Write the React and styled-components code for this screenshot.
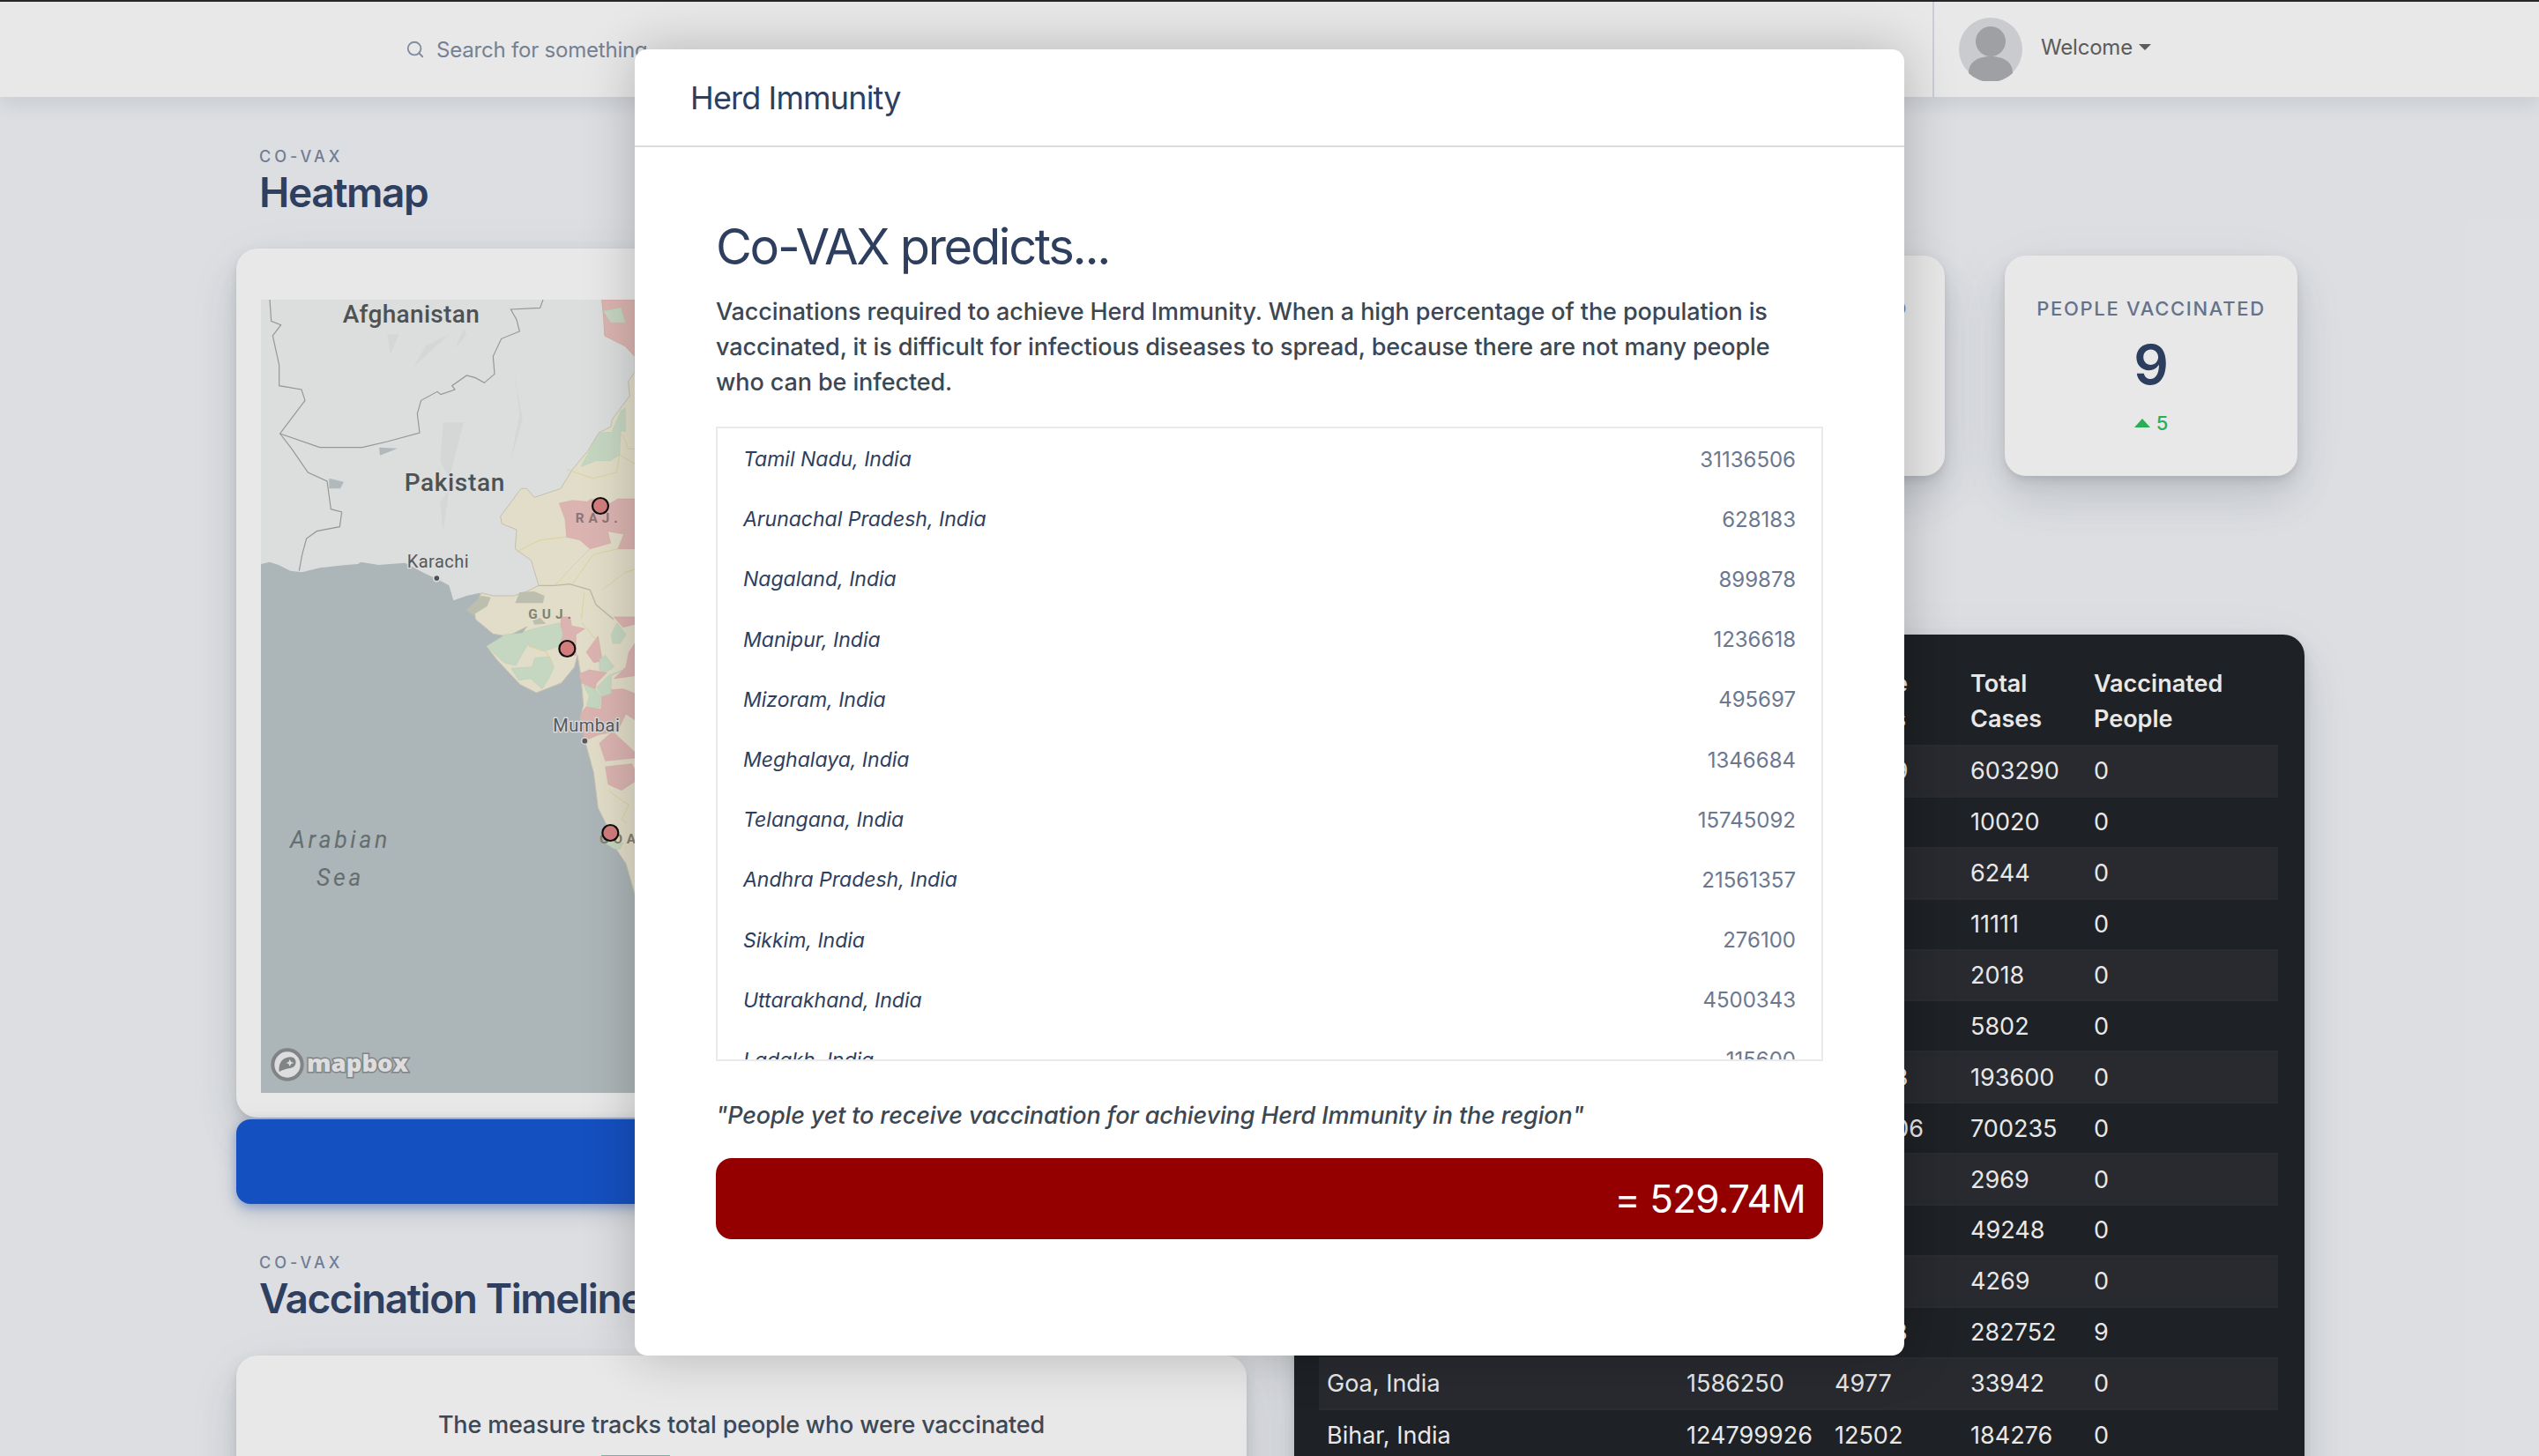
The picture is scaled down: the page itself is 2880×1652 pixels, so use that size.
import React from 'react';
import styled, { createGlobalStyle } from 'styled-components';
import { Search } from 'lucide-react';

const GlobalStyle = createGlobalStyle`
  html, body {
    margin: 0;
    padding: 0;
    background: #f3f5f9;
    font-family: Inter, "Noto Sans", sans-serif;
  }
  * { box-sizing: border-box; }
`;

const cardShadow = `
  0 15px 70px rgba(90,97,105,.1),
  0 30px 45px rgba(90,97,105,.1),
  0 8px 17px rgba(90,97,105,.12),
  0 4px 6px rgba(90,97,105,.1)
`;

const Page = styled.div`
  position: relative;
  height: 1652px;
  overflow: hidden;
`;

const Backdrop = styled.div`
  position: absolute;
  inset: 0;
  background: rgba(0,0,0,.09);
`;

const Topbar = styled.header`
  display: flex;
  height: 110px;
  background: #fff;
  border-top: 2px solid #2a2a2a;
  box-shadow: 0 6px 24px rgba(90,97,105,.16);
`;

const SearchBox = styled.div`
  flex: 1;
  display: flex;
  align-items: center;
  gap: 13px;
  padding: 2px 0 0 460px;
  height: 110px;
  margin-top: -2px;
  color: #8d9bb0;
  font-size: 24px;
  letter-spacing: -0.2px;
  span { color: #818ea3; }
`;

const UserArea = styled.div`
  width: 688px;
  display: flex;
  align-items: center;
  gap: 21px;
  padding-left: 28px;
  border-left: 2px solid #dfe3e9;
`;

const Avatar = styled.svg`
  width: 72px;
  height: 72px;
  margin-top: -1px;
  display: block;
`;

const Welcome = styled.div`
  display: flex;
  align-items: center;
  gap: 7px;
  color: #666;
  font-size: 24px;
  letter-spacing: -0.2px;
  margin-top: -6px;
  &::after {
    content: "";
    border-left: 7px solid transparent;
    border-right: 7px solid transparent;
    border-top: 7px solid #666;
  }
`;

const Main = styled.main`
  display: grid;
  grid-template-columns: 1146px 1146px;
  gap: 54px;
  padding-left: 268px;
`;

const Column = styled.section``;

const SectionHead = styled.div`
  padding-left: 26px;
  margin-top: ${p => p.$top}px;
  margin-bottom: ${p => p.$bottom}px;
`;

const Eyebrow = styled.div`
  font-size: 18px;
  line-height: 24px;
  letter-spacing: 4px;
  color: #7c8aa3;
  font-weight: 500;
`;

const PageTitle = styled.h1`
  margin: 0;
  font-size: 46px;
  line-height: 56px;
  font-weight: 600;
  letter-spacing: -1.4px;
  color: #344669;
  white-space: nowrap;
`;

const MapCard = styled.div`
  background: #fff;
  border-radius: 24px;
  padding: 58px 28px 28px;
  box-shadow: ${cardShadow};
`;

const MapSvg = styled.svg`
  display: block;
  width: 1090px;
  height: 900px;
`;

const BlueBar = styled.div`
  height: 96px;
  margin-top: 2px;
  border-radius: 16px;
  background: #1858d3;
  box-shadow: 0 4px 12px rgba(24,88,211,.4), 0 10px 30px rgba(90,97,105,.18);
`;

const TimelineCard = styled.div`
  background: #fff;
  border-radius: 24px 24px 0 0;
  padding-top: 59px;
  min-height: 300px;
  box-shadow: ${cardShadow};
`;

const MeasureText = styled.p`
  margin: 0;
  text-align: center;
  font-size: 27px;
  line-height: 40px;
  font-weight: 500;
  letter-spacing: -0.18px;
  color: #44505e;
`;

const ChartBar = styled.div`
  width: 78px;
  height: 20px;
  margin: 14px 0 0 414px;
  background: #7ac7b7;
`;

const StatsRow = styled.div`
  display: flex;
  gap: 68px;
  padding-left: 6px;
  margin-top: 180px;
`;

const StatCard = styled.div`
  width: 332px;
  height: 250px;
  padding-top: 46px;
  text-align: center;
  background: #fff;
  border-radius: 24px;
  box-shadow: ${cardShadow};
`;

const StatLabel = styled.div`
  font-size: 22px;
  line-height: 28px;
  letter-spacing: 1.7px;
  font-weight: 500;
  color: #6f7e98;
  white-space: nowrap;
`;

const StatValue = styled.div`
  margin-top: 18px;
  font-size: 62px;
  line-height: 64px;
  font-weight: 600;
  color: #314468;
`;

const StatDelta = styled.div`
  margin-top: 20px;
  display: flex;
  justify-content: center;
  align-items: center;
  gap: 7px;
  font-size: 22px;
  line-height: 28px;
  font-weight: 500;
  color: #2fc05c;
  &::before {
    content: "";
    border-left: 9px solid transparent;
    border-right: 9px solid transparent;
    border-bottom: 10px solid #2fc05c;
  }
`;

const TableCard = styled.div`
  margin-top: 180px;
  padding: 36px 30px 0 28px;
  background: #222529;
  border-radius: 24px 24px 0 0;
  height: 1000px;
  box-shadow: ${cardShadow};
`;

const DataTable = styled.table`
  width: 1088px;
  table-layout: fixed;
  border-collapse: collapse;
  color: #fff;
  font-size: 27px;
`;

const HeadCell = styled.th`
  width: ${p => p.$w}px;
  text-align: left;
  vertical-align: top;
  padding: 0 0 9px 9px;
  line-height: 40px;
  font-weight: 600;
`;

const Row = styled.tr`
  background: ${p => (p.$odd ? '#2c2f34' : 'transparent')};
  border-top: 2px solid #2e3136;
`;

const Cell = styled.td`
  height: 57.9px;
  padding: 0 0 0 9px;
  white-space: nowrap;
`;

const Modal = styled.div`
  position: absolute;
  left: 720px;
  top: 56px;
  width: 1440px;
  height: 1482px;
  background: #fff;
  border-radius: 14px;
  box-shadow: 0 0 60px rgba(0,0,0,.22);
`;

const ModalHeader = styled.div`
  height: 111px;
  display: flex;
  align-items: center;
  padding-left: 63px;
  border-bottom: 2px solid #d9dde2;
  font-size: 36px;
  letter-spacing: -0.85px;
  color: #2d3e5e;
`;

const ModalBody = styled.div`
  padding: 0 92px;
`;

const ModalHeading = styled.h2`
  margin: 79px 0 0;
  font-size: 56px;
  line-height: 68px;
  font-weight: 400;
  letter-spacing: -2.3px;
  color: #2d3e5e;
`;

const ModalText = styled.p`
  margin: 20px 0 30px;
  font-size: 27px;
  line-height: 40px;
  font-weight: 500;
  letter-spacing: -0.1px;
  color: #3d4752;
`;

const RegionList = styled.div`
  height: 720px;
  padding-top: 1px;
  overflow: hidden;
  border: 2px solid #e9eaec;
`;

const RegionRow = styled.div`
  height: 68.2px;
  padding: 0 29px 0 29px;
  display: flex;
  justify-content: space-between;
  align-items: center;
  font-size: 24px;
`;

const RegionName = styled.span`
  font-size: 23px;
  font-style: italic;
  color: #2d3e5e;
`;

const RegionCount = styled.span`
  color: #6b7890;
`;

const Quote = styled.p`
  margin: 42px 0 28px;
  font-size: 27px;
  line-height: 40px;
  font-style: italic;
  font-weight: 500;
  letter-spacing: -0.14px;
  color: #3d4752;
`;

const ResultBar = styled.div`
  height: 92px;
  padding-right: 20px;
  display: flex;
  align-items: center;
  justify-content: flex-end;
  border-radius: 18px;
  background: #940000;
  color: #fff;
  font-size: 44px;
  letter-spacing: -0.8px;
`;

const regions = [
  ['Tamil Nadu, India', 31136506],
  ['Arunachal Pradesh, India', 628183],
  ['Nagaland, India', 899878],
  ['Manipur, India', 1236618],
  ['Mizoram, India', 495697],
  ['Meghalaya, India', 1346684],
  ['Telangana, India', 15745092],
  ['Andhra Pradesh, India', 21561357],
  ['Sikkim, India', 276100],
  ['Uttarakhand, India', 4500343],
  ['Ladakh, India', 115600],
];

const tableRows = [
  ['Tamil Nadu, India', 77841267, 38249, 603290, 0],
  ['Arunachal Pradesh, India', 1570458, 56, 10020, 0],
  ['Nagaland, India', 2249695, 79, 6244, 0],
  ['Manipur, India', 3091545, 142, 11111, 0],
  ['Mizoram, India', 1239244, 27, 2018, 0],
  ['Meghalaya, India', 3366710, 95, 5802, 0],
  ['Telangana, India', 39362732, 29053, 193600, 0],
  ['Andhra Pradesh, India', 53903393, 300506, 700235, 0],
  ['Sikkim, India', 690251, 91, 2969, 0],
  ['Uttarakhand, India', 11250858, 4123, 49248, 0],
  ['Ladakh, India', 289023, 318, 4269, 0],
  ['Gujarat, India', 63872399, 28253, 282752, 9],
  ['Goa, India', 1586250, 4977, 33942, 0],
  ['Bihar, India', 124799926, 12502, 184276, 0],
];

const columns = [
  ['Region', 408],
  ['Population', 168],
  ['Active Cases', 154],
  ['Total Cases', 140],
  ['Vaccinated People', 218],
];

const HeatMap = () => (
  <MapSvg viewBox="0 12 3270 2700">
    <rect x="0" y="12" width="3270" height="2700" fill="#bec7ca" />
    {/* land above the coast */}
    <path
      d="M0 12H3270V1100H760L745 1010 700 1020 655 1036 640 985 610 968 560 945 490 908 400 915 340 905 330 912 290 915 200 925 140 940 100 935 60 915 30 905 0 912Z"
      fill="#f2f3f3"
    />
    {/* relief */}
    <g fill="#ebeded">
      <path d="M620 430L690 430 640 620 610 560Z" />
      <path d="M860 250L890 420 850 560 880 400Z" />
      <path d="M560 170L640 130 520 240Z" />
      <path d="M640 660L620 800 610 700Z" />
      <path d="M430 130L470 130 440 200Z" />
      <path d="M700 130L660 180 690 110Z" />
    </g>
    <path d="M402 515L465 518 405 542Z" fill="#c4ccd0" />
    <path d="M232 620L282 632 270 655 232 655Z" fill="#c4ccd0" />
    {/* India */}
    <path
      d="M1272 260L1250 290 1255 340 1195 420 1190 445 1150 465 1110 530 1060 590 1020 655 930 685 905 655 885 655 815 750 820 775 870 795 865 860 920 900 945 985 905 1005 860 1020 790 1020 750 1010 725 1065 730 1100 790 1150 840 1158 905 1125 870 1175 770 1195 802 1237 882 1322 937 1350 1022 1317 1067 1262 1077 1222 1087 1282 1092 1332 1097 1392 1087 1432 1102 1512 1132 1622 1147 1742 1172 1792 1202 1872 1242 1932 1272 2037 1500 2500H3270V12H1160L1165 60 1170 135 1240 170 1272 205Z"
      fill="#f8f3dc"
      stroke="#d8d4c2"
      strokeWidth="3"
    />
    <g fill="#cfd2bf">
      <path d="M697 1070L750 1020 782 1025 770 1055 722 1085Z" />
      <path d="M865 1045L880 1008 930 1005 965 1020 960 1045Z" />
      <path d="M925 1105L950 1095 970 1115 930 1118Z" />
    </g>
    <g fill="none" stroke="#f5e6b0" strokeWidth="3">
      <path d="M870 870L950 830 1040 820M1000 985L1060 920 1120 860 1190 840M1060 980L1130 880 1215 860M1210 600L1220 540 1272 570M1100 1010L1090 1100M1160 1000L1240 940 1272 930" />
      <path d="M1040 590L1130 620 1210 600M1230 470L1250 520 1272 520" />
    </g>
    <path d="M945 985L1000 985 1050 980 1120 1000 1140 1050 1200 1100" fill="none" stroke="#cfcab2" strokeWidth="4" />
    {/* states with the red and green shading */}
    <g fill="#f1c6c3" stroke="#ecb4b2" strokeWidth="1.5">
      <path d="M1015 705L1060 695 1110 700 1125 690 1180 710 1215 690 1272 690V860H1215L1235 810 1180 800 1190 840 1120 860 1085 830 1040 820 1035 760Z" />
      <path d="M1160 12H1272V205L1240 170 1170 135 1165 60Z" />
    </g>
    <g fill="#d9ecd5" stroke="#c8e2c2" strokeWidth="1.5">
      <path d="M1165 50L1225 40 1240 90 1190 90Z" />
      <path d="M1195 460L1225 390 1240 380 1240 460Z" />
      <path d="M1090 580L1150 465 1225 462 1220 540 1190 560 1140 560Z" />
    </g>
    <g transform="translate(732 1092)">
      <g fill="#f1c6c3" stroke="#ecb4b2" strokeWidth="1.5">
        <path d="M290 0H320L325 30 370 40 340 60 340 130H300L285 60Z" />
        <path d="M375 120L415 65 430 150 400 155Z" />
        <path d="M350 195L385 180 445 190 410 225 405 245 360 225Z" />
        <path d="M355 330L375 305 425 315 430 250 500 245 540 260V350L510 330 480 390 420 400 385 415 370 410Z" />
        <path d="M420 430L465 390 540 460V480L440 490Z" />
        <path d="M440 510L530 500 540 520V560L495 590 450 570Z" />
        <path d="M470 0H540V25L500 35Z" />
        <path d="M520 120L540 90V200L470 210 510 170Z" />
      </g>
      <g fill="#d9ecd5" stroke="#c8e2c2" strokeWidth="1.5">
        <path d="M35 100L100 60 155 55 180 45 240 30 285 20 295 60 280 100 235 115 175 95 135 165 95 155Z" />
        <path d="M120 175L190 170 200 140 250 135 265 170 250 205 225 245 185 210 145 215Z" />
        <path d="M460 60L480 20 510 60 490 90 465 90Z" />
        <path d="M420 145L440 130 470 170 440 190 420 180Z" />
        <path d="M410 240L450 200 500 180 460 200 460 260 430 270Z" />
        <path d="M365 230L410 250 425 270 420 310 375 305 385 270Z" />
        <path d="M440 770L460 760 500 770 490 790 470 790Z" />
      </g>
      <path d="M450 590L490 620 520 640 495 690 510 700M360 20L410 80M180 100L240 120 260 170" fill="none" stroke="#f5e6b0" strokeWidth="3" />
    </g>
    {/* borders */}
    <g fill="none" stroke="#a3a6a7" strokeWidth="3.5">
      <path d="M30 12L35 85 68 98 40 135 62 235 62 305 138 318 150 355 65 468 200 515 345 515 430 495 540 465 532 400 545 355 600 325 612 335 660 318 650 305 700 270 730 278 760 295 795 265 790 205 818 145 880 120 870 80 850 45 950 40 960 12" />
      <path d="M65 468L105 520 160 600 225 630 238 725 275 735 268 785 190 800 155 825 140 880 130 935" />
    </g>
    {/* labels */}
    <g fontFamily="Roboto, sans-serif" fontWeight="500" style={{ paintOrder: 'stroke' }} stroke="#f2f3f3" strokeWidth="8">
      <text x="278" y="90" fontSize="84" letterSpacing="1" fill="#555b60">Afghanistan</text>
      <text x="488" y="663" fontSize="84" letterSpacing="2" fill="#555b60">Pakistan</text>
      <text x="497" y="925" fontSize="60" letterSpacing="1.5" fontWeight="400" fill="#5d6367">Karachi</text>
      <text x="994" y="1482" fontSize="60" letterSpacing="1.5" fontWeight="400" fill="#5d6367">Mumbai</text>
    </g>
    <g fontFamily="Roboto, sans-serif" fontWeight="700" fontSize="46" letterSpacing="15">
      <text x="910" y="1098" fill="#8f8e7d">GUJ.</text>
      <text x="1070" y="772" fill="#9d7f80">RAJ.</text>
      <text x="1152" y="1862" fill="#8f8e7d">GOA</text>
    </g>
    <g fontFamily="Roboto, sans-serif" fontStyle="italic" fontSize="80" letterSpacing="11" textAnchor="middle" fill="#70797c">
      <text x="270" y="1878">Arabian</text>
      <text x="270" y="2007">Sea</text>
    </g>
    <circle cx="90" cy="2616" r="50" fill="#f3f3f3" stroke="#8d9294" strokeWidth="12" />
    <path d="M62 2640C58 2600 85 2590 100 2590C125 2590 125 2625 100 2628C85 2630 75 2634 62 2640Z" fill="#8d9294" />
    <path d="M98 2598L103 2607 113 2610 103 2613 98 2622 94 2613 85 2610 94 2607Z" fill="#f3f3f3" />
    <text x="156" y="2640" fontFamily="Open Sans, sans-serif" fontWeight="800" fontSize="80" textLength="345" lengthAdjust="spacingAndGlyphs" fill="#f3f3f3" stroke="#8d9294" strokeWidth="9" style={{ paintOrder: 'stroke' }}>mapbox</text>
    <circle cx="598" cy="960" r="11" fill="#55595c" stroke="#f2f3f3" strokeWidth="5" />
    <circle cx="1102" cy="1514" r="11" fill="#6b5f60" stroke="#e8eaeb" strokeWidth="5" />
    {/* markers */}
    <g fill="#e98a8a" stroke="#111" strokeWidth="6.5">
      <circle cx="1155" cy="714" r="27" />
      <circle cx="1042" cy="1200" r="27" />
      <circle cx="1189" cy="1827" r="27" />
    </g>
  </MapSvg>
);

export default function App() {
  return (
    <Page>
      <GlobalStyle />
      <Topbar>
        <SearchBox>
          <Search size={22} strokeWidth={2} />
          <span>Search for something...</span>
        </SearchBox>
        <UserArea>
          <Avatar viewBox="0 0 72 72">
            <circle cx="36" cy="36" r="36" fill="#dde0e4" />
            <circle cx="36" cy="27" r="17" fill="#aeb0b4" />
            <path d="M11 63C11 50 22 44 36 44C50 44 61 50 61 63A36 36 0 0 1 11 63Z" fill="#aeb0b4" />
          </Avatar>
          <Welcome>Welcome</Welcome>
        </UserArea>
      </Topbar>

      <Main>
        <Column>
          <SectionHead $top={56} $bottom={36}>
            <Eyebrow>CO-VAX</Eyebrow>
            <PageTitle>Heatmap</PageTitle>
          </SectionHead>
          <MapCard>
            <HeatMap />
          </MapCard>
          <BlueBar />
          <SectionHead $top={55} $bottom={37}>
            <Eyebrow>CO-VAX</Eyebrow>
            <PageTitle>Vaccination Timeline</PageTitle>
          </SectionHead>
          <TimelineCard>
            <MeasureText>The measure tracks total people who were vaccinated</MeasureText>
            <ChartBar />
          </TimelineCard>
        </Column>

        <Column>
          <StatsRow>
            <StatCard>
              <StatLabel>TOTAL CASES</StatLabel>
            </StatCard>
            <StatCard>
              <StatLabel>DOSES VACCINATED</StatLabel>
            </StatCard>
            <StatCard>
              <StatLabel>PEOPLE VACCINATED</StatLabel>
              <StatValue>9</StatValue>
              <StatDelta>5</StatDelta>
            </StatCard>
          </StatsRow>
          <TableCard>
            <DataTable>
              <thead>
                <tr>
                  {columns.map(([title, w]) => (
                    <HeadCell key={title} $w={w}>{title}</HeadCell>
                  ))}
                </tr>
              </thead>
              <tbody>
                {tableRows.map((row, i) => (
                  <Row key={row[0]} $odd={i % 2 === 0}>
                    {row.map((v, j) => (
                      <Cell key={j}>{v}</Cell>
                    ))}
                  </Row>
                ))}
              </tbody>
            </DataTable>
          </TableCard>
        </Column>
      </Main>

      <Backdrop />

      <Modal>
        <ModalHeader>Herd Immunity</ModalHeader>
        <ModalBody>
          <ModalHeading>Co-VAX predicts...</ModalHeading>
          <ModalText>
            Vaccinations required to achieve Herd Immunity. When a high percentage of the population is
            vaccinated, it is difficult for infectious diseases to spread, because there are not many people
            who can be infected.
          </ModalText>
          <RegionList>
            {regions.map(([name, count]) => (
              <RegionRow key={name}>
                <RegionName>{name}</RegionName>
                <RegionCount>{count}</RegionCount>
              </RegionRow>
            ))}
          </RegionList>
          <Quote>"People yet to receive vaccination for achieving Herd Immunity in the region"</Quote>
          <ResultBar>= 529.74M</ResultBar>
        </ModalBody>
      </Modal>
    </Page>
  );
}
